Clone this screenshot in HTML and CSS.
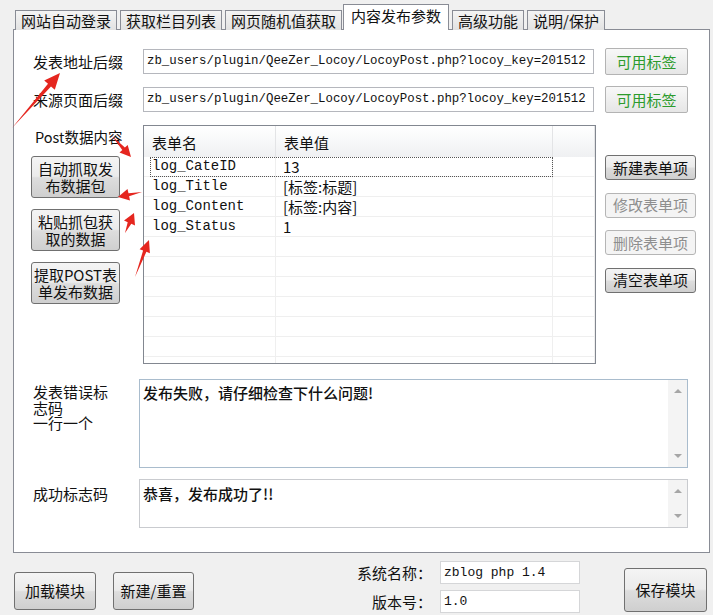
FILE: index.html
```html
<!DOCTYPE html>
<html lang="zh-CN">
<head>
    <meta charset="UTF-8">
    <title>内容发布参数</title>
    <link rel="stylesheet" href="styles.css">
</head>
<body>
    <div class="tabs">
        <div class="tab">网站自动登录</div>
        <div class="tab">获取栏目列表</div>
        <div class="tab">网页随机值获取</div>
        <div class="tab active">内容发布参数</div>
        <div class="tab">高级功能</div>
        <div class="tab">说明/保护</div>
    </div>

    <div class="panel">
        <div class="field-row first">
            <div class="field-label">发表地址后缀</div>
            <div class="url-box">zb_users/plugin/QeeZer_Locoy/LocoyPost.php?locoy_key=201512</div>
            <button class="tag-btn">可用标签</button>
        </div>
        <div class="field-row">
            <div class="field-label">来源页面后缀</div>
            <div class="url-box">zb_users/plugin/QeeZer_Locoy/LocoyPost.php?locoy_key=201512</div>
            <button class="tag-btn">可用标签</button>
        </div>

        <div class="middle">
            <div class="left-col">
                <div class="post-label">Post数据内容</div>
                <button class="btn tall">自动抓取发<br>布数据包</button>
                <button class="btn tall">粘贴抓包获<br>取的数据</button>
                <button class="btn tall">提取POST表<br>单发布数据</button>
            </div>

            <div class="list-view">
                <div class="list-head">
                    <div class="head-cell">表单名</div>
                    <div class="head-cell">表单值</div>
                    <div class="head-cell"></div>
                </div>
                <div class="list-row focused">
                    <div class="cell name">log_CateID</div>
                    <div class="cell">13</div>
                    <div class="cell"></div>
                </div>
                <div class="list-row">
                    <div class="cell name">log_Title</div>
                    <div class="cell">[标签:标题]</div>
                    <div class="cell"></div>
                </div>
                <div class="list-row">
                    <div class="cell name">log_Content</div>
                    <div class="cell">[标签:内容]</div>
                    <div class="cell"></div>
                </div>
                <div class="list-row">
                    <div class="cell name">log_Status</div>
                    <div class="cell">1</div>
                    <div class="cell"></div>
                </div>
                <div class="list-row"><div class="cell"></div><div class="cell"></div><div class="cell"></div></div>
                <div class="list-row"><div class="cell"></div><div class="cell"></div><div class="cell"></div></div>
                <div class="list-row"><div class="cell"></div><div class="cell"></div><div class="cell"></div></div>
                <div class="list-row"><div class="cell"></div><div class="cell"></div><div class="cell"></div></div>
                <div class="list-row"><div class="cell"></div><div class="cell"></div><div class="cell"></div></div>
                <div class="list-row"><div class="cell"></div><div class="cell"></div><div class="cell"></div></div>
                <div class="list-row"><div class="cell"></div><div class="cell"></div><div class="cell"></div></div>
            </div>

            <div class="right-col">
                <button class="btn small">新建表单项</button>
                <button class="btn small" disabled>修改表单项</button>
                <button class="btn small" disabled>删除表单项</button>
                <button class="btn small">清空表单项</button>
            </div>
        </div>

        <div class="memo-row">
            <div class="memo-label">发表错误标志码<br>一行一个</div>
            <div class="memo big">
                <div class="memo-text">发布失败，请仔细检查下什么问题!</div>
                <div class="memo-bar"><span class="arrow up"></span><span class="arrow down"></span></div>
            </div>
        </div>
        <div class="memo-row second">
            <div class="memo-label">成功标志码</div>
            <div class="memo">
                <div class="memo-text">恭喜，发布成功了!!</div>
                <div class="memo-bar"><span class="arrow up"></span><span class="arrow down"></span></div>
            </div>
        </div>
    </div>

    <div class="footer">
        <button class="btn foot">加载模块</button>
        <button class="btn foot new">新建/重置</button>
        <div class="sysinfo">
            <span class="sys-label">系统名称：</span>
            <div class="sys-box">zblog php 1.4</div>
            <span class="sys-label">版本号：</span>
            <div class="sys-box">1.0</div>
        </div>
        <button class="btn save">保存模块</button>
    </div>

    <!-- red note arrows drawn over the form -->
    <svg class="notes" width="713" height="615" viewBox="0 0 713 615">
        <g fill="#e5261f">
            <polygon points="12,128 48,83.7 44.2,80.4 60,73 54.8,89.7 51,86.4"/>
            <polygon points="112,136 124.9,147.6 127.7,145.1 131,157 119.5,152.5 122.3,150"/>
            <polygon points="142,192 128.5,193.3 127.5,188.9 118,197 130,200.6 129.1,196.3"/>
            <polygon points="125,233 127.7,222.2 124,220.6 134,213 135,225.5 131.3,223.8"/>
            <polygon points="135,277 143.1,250.6 139.6,249.3 149,240 149.9,253.2 146.4,251.8"/>
        </g>
    </svg>
</body>
</html>
```
FILE: styles.css
```css
body {
    margin: 0;
    width: 713px;
    height: 615px;
    overflow: hidden;
    position: relative;
    background-color: #f0f0f0;
    font-family: "Noto Sans CJK SC", "Noto Sans", sans-serif;
    font-size: 15px;
    color: #111;
}
button {
    font-family: inherit;
    font-size: 15px;
    color: #111;
    padding: 0;
    box-sizing: border-box;
}

/* tab strip */
.tabs {
    display: flex;
    align-items: flex-end;
    height: 26px;
    padding: 4px 0 0 15px;
    margin-bottom: -1px;
    position: relative;
    z-index: 1;
}
.tab {
    height: 20px;
    line-height: 19px;
    padding: 0 5px;
    margin-right: 3px;
    border: 1px solid #898c95;
    border-bottom: none;
    background: linear-gradient(#f4f4f4, #e2e2e2);
    box-sizing: border-box;
    white-space: nowrap;
}
.tab.active {
    height: 26px;
    line-height: 22px;
    padding: 0 7px;
    margin-left: -2px;
    background: #fff;
}

/* tab page */
.panel {
    margin-left: 13px;
    width: 697px;
    height: 524px;
    box-sizing: border-box;
    border: 1px solid #898c95;
    background-color: #fff;
    padding-top: 18px;
}
.field-row {
    display: flex;
    align-items: center;
    height: 27px;
    margin-top: 11px;
}
.field-row.first {
    margin-top: 0;
}
.field-label {
    width: 129px;
    padding-left: 19px;
    box-sizing: border-box;
    line-height: 18px;
}
.url-box {
    width: 451px;
    height: 25px;
    box-sizing: border-box;
    border: 1px solid #b5b7bd;
    padding-left: 3px;
    font-family: "Liberation Mono", monospace;
    font-size: 12.4px;
    line-height: 23px;
    white-space: nowrap;
    overflow: hidden;
    color: #111;
}
.tag-btn {
    margin-left: 11px;
    width: 83px;
    height: 27px;
    border: 1px solid #b3b3b3;
    border-radius: 2px;
    background: linear-gradient(#f8f8f8, #e6e6e6);
    color: #2c9b2c;
    line-height: 25px;
}

/* generic win7 button */
.btn {
    border: 1px solid #707070;
    border-radius: 3px;
    background: linear-gradient(#f4f4f4 0%, #ebebeb 48%, #dddddd 52%, #cfcfcf 100%);
    line-height: 16px;
}
.btn:disabled {
    border-color: #b5b5b5;
    background: #f4f4f4;
    color: #8e8e8e;
}

.middle {
    display: flex;
    margin-top: 12px;
    height: 239px;
}
.left-col {
    width: 129px;
    padding-left: 17px;
    box-sizing: border-box;
    display: flex;
    flex-direction: column;
    gap: 11px;
}
.post-label {
    padding: 3px 0 0 4px;
    line-height: 18px;
    height: 19px;
    margin-bottom: -2px;
    font-size: 14.5px;
}
.btn.tall {
    width: 89px;
    height: 42px;
    line-height: 17px;
}
.right-col {
    margin-left: 9px;
    padding-top: 30px;
    display: flex;
    flex-direction: column;
    gap: 12.5px;
}
.btn.small {
    width: 91px;
    height: 25px;
}

/* list view */
.list-view {
    width: 453px;
    height: 239px;
    box-sizing: border-box;
    border: 1px solid #828790;
    overflow: hidden;
}
.list-head,
.list-row {
    display: grid;
    grid-template-columns: 132px 277px 1fr;
}
.list-head {
    height: 31px;
    background: linear-gradient(#ffffff 0%, #f7f8f9 50%, #eff0f2 100%);
}
.head-cell {
    border-right: 1px solid #e3e4e6;
    padding-left: 8px;
    line-height: 34px;
    font-size: 15px;
}
.list-row {
    height: 20px;
    box-sizing: border-box;
    border-bottom: 1px solid #efefef;
    position: relative;
}
.cell {
    border-right: 1px solid #efefef;
    padding-left: 7px;
    line-height: 19px;
    font-size: 15px;
    white-space: nowrap;
}
.cell.name {
    padding-left: 8px;
    font-family: "Liberation Mono", monospace;
    font-size: 14px;
}
.list-row.focused::after {
    content: "";
    position: absolute;
    left: 6px;
    right: 42px;
    top: 0;
    bottom: -1px;
    border: 1px dotted #555;
}

/* memo boxes */
.memo-row {
    display: flex;
    margin-top: 15px;
}
.memo-row.second {
    margin-top: 11px;
}
.memo-label {
    width: 125px;
    box-sizing: border-box;
    padding: 5px 28px 0 19px;
    line-height: 15.5px;
}
.memo-row.second .memo-label {
    padding-top: 7px;
}
.memo {
    width: 549px;
    height: 49px;
    box-sizing: border-box;
    border: 1px solid #c9cbcf;
    display: flex;
}
.memo.big {
    height: 89px;
    border-color: #a9bccd;
}
.memo-text {
    flex: 1;
    padding: 5px 0 0 3px;
    line-height: 16px;
    font-weight: 500;
}
.memo-row.second .memo-text {
    padding-top: 6px;
}
.memo-bar {
    width: 19px;
    background-color: #f4f4f4;
    display: flex;
    flex-direction: column;
    justify-content: space-between;
    align-items: center;
    padding: 9px 0 9px;
}
.arrow {
    width: 0;
    height: 0;
    border-left: 4px solid transparent;
    border-right: 4px solid transparent;
}
.arrow.up {
    border-bottom: 4px solid #a6a6a6;
}
.arrow.down {
    border-top: 4px solid #a6a6a6;
}

/* bottom bar */
.footer {
    display: flex;
    align-items: flex-start;
    padding-left: 14px;
}
.btn.foot {
    margin-top: 19px;
    width: 82px;
    height: 38px;
}
.btn.foot.new {
    margin-left: 17px;
    width: 81px;
}
.sysinfo {
    margin-left: auto;
    margin-top: 8px;
    display: grid;
    grid-template-columns: auto 140px;
    column-gap: 8px;
    row-gap: 6px;
    align-items: center;
}
.sys-label {
    text-align: right;
    line-height: 18px;
}
.sys-box {
    height: 23px;
    box-sizing: border-box;
    border: 1px solid #d5d6d8;
    background-color: #fff;
    padding-left: 3px;
    font-family: "Liberation Mono", monospace;
    font-size: 13px;
    line-height: 21px;
}
.btn.save {
    margin: 15px 6px 0 44px;
    width: 83px;
    height: 44px;
}

.notes {
    position: absolute;
    top: 0;
    left: 0;
    pointer-events: none;
}
```
